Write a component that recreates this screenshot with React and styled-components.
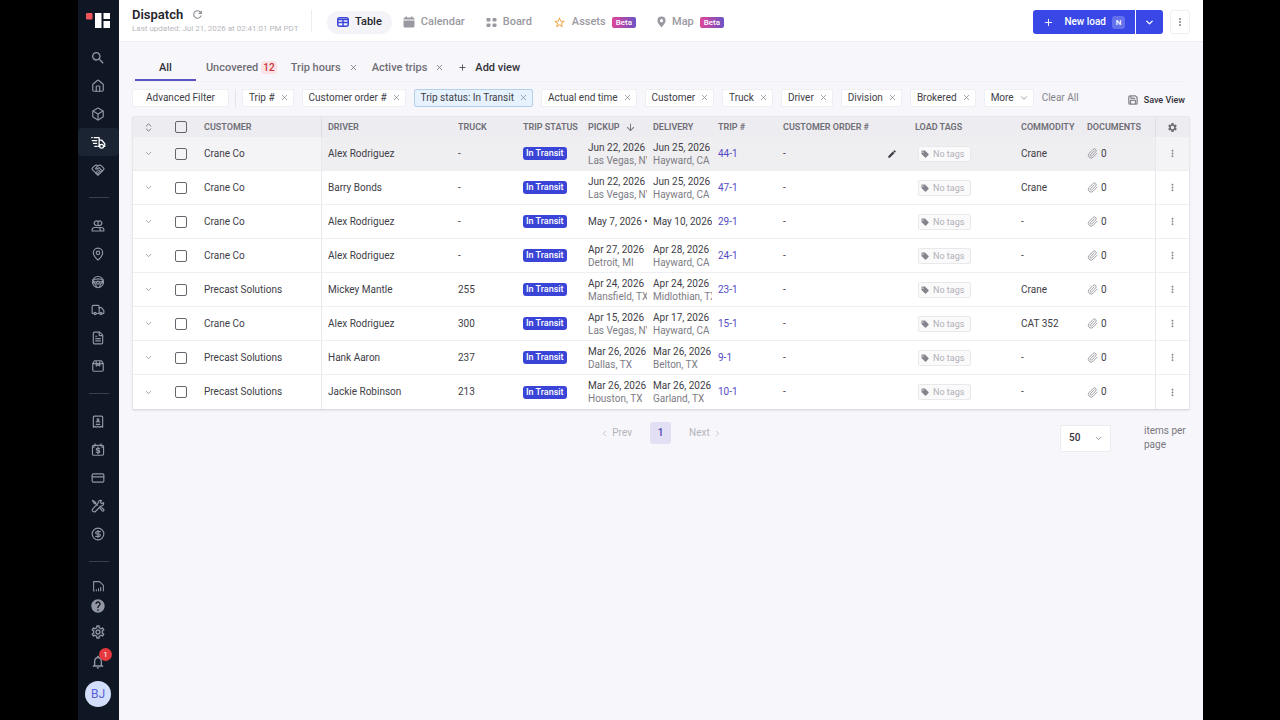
import React, { useState } from 'react';
import styled, { createGlobalStyle, css } from 'styled-components';
import {
  Box,
  ChevronDown,
  ChevronLeft,
  ChevronRight,
  ChevronsUpDown,
  CircleDollarSign,
  CreditCard,
  FileText,
  House,
  MapPin,
  Paperclip,
  Plus,
  Truck,
  X,
} from 'lucide-react';
import {
  MdArrowDownward,
  MdEdit,
  MdHelp,
  MdMoreVert,
  MdOutlineSettings,
  MdNotificationsNone,
  MdRefresh,
  MdSearch,
  MdSettings,
  MdStarBorder,
} from 'react-icons/md';

const GlobalStyle = createGlobalStyle`
  * {
    box-sizing: border-box;
  }

  body {
    margin: 0;
    background: #000;
    color: #3e3d46;
    font-family: Roboto, "Open Sans", sans-serif;
    font-size: 10px;
    line-height: 14px;
  }

  button, input, select {
    font: inherit;
    color: inherit;
  }

  button {
    border: none;
    background: none;
    padding: 0;
    cursor: pointer;
  }

  a {
    text-decoration: none;
  }

  svg {
    display: block;
    flex-shrink: 0;
  }
`;

const Shell = styled.div`
  display: flex;
  min-height: 100vh;
  padding: 0 77px 0 78px;
`;

const Sidebar = styled.nav`
  display: flex;
  flex-direction: column;
  align-items: center;
  width: 41px;
  flex-shrink: 0;
  background: #0f1724;
`;

const Logo = styled.div`
  display: flex;
  justify-content: center;
  height: 44px;
  padding: 12px 1px 0 0;
`;

const NavButton = styled.button`
  position: relative;
  display: flex;
  align-items: center;
  justify-content: center;
  width: 100%;
  height: ${(props) => props.$height || 28}px;
  padding-right: 1px;
  color: ${(props) => (props.$active ? '#ffffff' : '#9297a3')};

  ${(props) =>
    props.$active &&
    css`
      background: #1b2433;
      border-radius: 4px;
    `}
`;

const NavDivider = styled.hr`
  width: 20px;
  height: 1px;
  margin: 13px 0 14px;
  border: none;
  background: #38404e;
`;

const Count = styled.span`
  position: absolute;
  top: 0;
  right: 7px;
  width: 13px;
  height: 13px;
  border-radius: 50%;
  background: #e5383f;
  color: #fff;
  font-size: 8px;
  line-height: 13px;
  text-align: center;
`;

const Avatar = styled.button`
  width: 26px;
  height: 26px;
  margin: 5px 1px 0 0;
  border-radius: 50%;
  background: #d3defb;
  color: #5863d8;
  font-size: 12px;
`;

const Main = styled.main`
  flex: 1;
  min-width: 0;
  background: #f7f6fa;
`;

const Header = styled.header`
  display: flex;
  align-items: center;
  height: 42px;
  padding: 3px 13px 0;
  background: #fff;
  border-bottom: 1px solid #eeedf2;
`;

const TitleBlock = styled.div`
  width: 180px;
  height: 22px;
  display: flex;
  flex-direction: column;
  justify-content: center;
  margin-bottom: 3px;
  border-right: 1px solid #ececf0;
`;

const TitleRow = styled.div`
  display: flex;
  align-items: center;
  gap: 8px;
  color: #8d8d96;
`;

const Title = styled.h1`
  margin: 0;
  color: #26252d;
  font-size: 13px;
  line-height: 16px;
  font-weight: 600;
`;

const Updated = styled.span`
  color: #b9b8be;
  font-size: 8px;
  line-height: 12px;
  white-space: nowrap;
`;

const ModeTabs = styled.div`
  display: flex;
  align-items: center;
  gap: 1px;
  margin-left: 15px;
`;

const ModeTab = styled.button`
  display: flex;
  align-items: center;
  gap: 6px;
  height: 23px;
  padding: 0 10px;
  border-radius: 12px;
  background: ${(props) => (props.$active ? '#f4f4f8' : 'transparent')};
  color: ${(props) => (props.$active ? '#26252d' : '#9a99a1')};
  font-size: 11px;
  font-weight: 500;
`;

const Beta = styled.span`
  padding: 0 4px;
  border-radius: 2px;
  background: linear-gradient(90deg, #e0469a, #6b52c4);
  color: #fff;
  font-size: 8px;
  line-height: 11px;
`;

const HeaderActions = styled.div`
  display: flex;
  align-items: center;
  gap: 7px;
  margin-left: auto;
`;

const SplitButton = styled.div`
  display: flex;
  gap: 1px;
  height: 24px;
  border-radius: 3px;
  overflow: hidden;
`;

const PrimaryButton = styled.button`
  display: flex;
  align-items: center;
  justify-content: center;
  gap: ${(props) => props.$gap || 0}px;
  padding: 0 ${(props) => props.$pad}px;
  background: #3847e6;
  color: #fff;
  font-size: 10px;
  font-weight: 500;
`;

const Key = styled.kbd`
  margin-left: -4px;
  width: 13px;
  border-radius: 3px;
  background: #6470ee;
  font-family: inherit;
  font-size: 8px;
  line-height: 13px;
`;

const SquareButton = styled.button`
  display: flex;
  align-items: center;
  justify-content: center;
  width: 20px;
  height: 24px;
  border: 1px solid #f0f0f3;
  border-radius: 3px;
  color: #8d8c94;
`;

const Content = styled.div`
  padding: 10px 13px 0;
`;

const ViewTabs = styled.div`
  display: flex;
  align-items: stretch;
  height: 30px;
  margin-right: 4px;
  border-bottom: 1px solid #f0eff3;
`;

const ViewTab = styled.button`
  display: flex;
  align-items: center;
  gap: ${(props) => props.$gap || 8}px;
  margin: ${(props) => (props.$active ? '0 3px' : 0)};
  padding: 4px ${(props) => (props.$active ? 24 : 7)}px 0;
  border-bottom: 2px solid ${(props) => (props.$active ? '#5a55c6' : 'transparent')};
  color: ${(props) => (props.$dark ? '#34333b' : '#6f6e76')};
  font-size: 11px;
  font-weight: 500;
`;

const RedCount = styled.span`
  padding: 0 2px;
  border-radius: 4px;
  background: #fbe3e5;
  color: #c8323c;
  font-size: 10px;
  line-height: 13px;
`;

const Filters = styled.div`
  display: flex;
  align-items: center;
  gap: 8px;
  height: 34px;
  padding-bottom: 3px;
`;

const Chip = styled.button`
  display: flex;
  align-items: center;
  justify-content: center;
  gap: 5px;
  height: 18px;
  padding: ${(props) => (props.$wide ? '0 13px' : '0 4px 0 6px')};
  border: 1px solid ${(props) => (props.$active ? '#b3d0e8' : '#efeef2')};
  border-radius: 2px;
  background: ${(props) => (props.$active ? '#e6f2fd' : '#fff')};
  white-space: nowrap;

  svg {
    color: #8b8a92;
  }
`;

const Separator = styled.span`
  width: 1px;
  height: 18px;
  margin: 0 -2px;
  background: #e5e4e9;
`;

const TextButton = styled.button`
  color: #85848c;
  white-space: nowrap;
`;

const SaveButton = styled.button`
  display: flex;
  align-items: center;
  gap: 6px;
  margin: 4px 5px 0 auto;
  color: #34333b;
  font-size: 9px;
  font-weight: 500;
  white-space: nowrap;

  svg {
    color: #85848c;
  }
`;

const TableCard = styled.div`
  border: 1px solid #e7e6eb;
  border-bottom-color: #dcdbe0;
  border-radius: 2px;
  background: #fff;
  box-shadow: 0 1px 2px rgba(30, 25, 50, 0.08);
`;

const Table = styled.table`
  width: 100%;
  table-layout: fixed;
  border-collapse: separate;
  border-spacing: 0;
`;

const Th = styled.th`
  height: 20px;
  padding: 0 6px;
  background: #edecf0;
  border-right: ${(props) => (props.$line ? '1px solid #dedde3' : 'none')};
  color: #6f6e77;
  font-size: 9px;
  font-weight: 600;
  text-align: left;
  text-transform: uppercase;
  white-space: nowrap;

  svg {
    margin: 0 auto;
  }
`;

const SortLabel = styled.span`
  display: flex;
  align-items: center;
  justify-content: space-between;
  padding-right: 5px;

  svg {
    margin: 0;
  }
`;

const Td = styled.td`
  height: 34px;
  padding: 0 6px;
  border-bottom: 1px solid #efeef3;
  border-right: ${(props) => (props.$line ? '1px solid #e9e8ed' : 'none')};
  white-space: nowrap;
  overflow: hidden;
`;

const Row = styled.tr`
  &:last-child td {
    border-bottom: none;
  }

  ${(props) =>
    props.$hovered &&
    css`
      td {
        background: #efeef1;
      }

      td:nth-child(-n + 3),
      td:last-child {
        background: #f4f3f6;
      }
    `}
`;

const IconButton = styled.button`
  display: block;
  margin: 0 auto;
  color: #85848c;
`;

const Checkbox = styled.input`
  display: block;
  appearance: none;
  width: 12px;
  height: 12px;
  margin: 0 auto;
  border: 1px solid #66656d;
  border-radius: 2px;

  &:checked {
    background: #3847e6;
  }
`;

const Status = styled.span`
  display: inline-block;
  padding: 0 3px;
  border-radius: 3px;
  background: #3a45d8;
  color: #fff;
  font-size: 9px;
  line-height: 13px;
  font-weight: 500;
  vertical-align: middle;
`;

const Stop = styled.div`
  overflow: hidden;
  line-height: 13px;
  margin-right: -6px;
`;

const Place = styled.div`
  color: #7d7c84;
`;

const TripLink = styled.a`
  color: #544bc4;
`;

const OrderCell = styled.div`
  display: flex;
  align-items: center;
  justify-content: space-between;
  padding-right: 6px;
`;

const Tags = styled.button`
  display: flex;
  align-items: center;
  gap: 4px;
  height: 16px;
  margin-left: 3px;
  padding: 0 6px 0 2px;
  border: 1px solid #e9e9ed;
  border-radius: 2px;
  background: #fafafb;
  color: #b0afb6;
  font-size: 9px;
`;

const Docs = styled.div`
  display: flex;
  align-items: center;
  gap: 3px;

  svg {
    color: #98979f;
  }
`;

const Footer = styled.footer`
  display: grid;
  grid-template-columns: 1fr auto 1fr;
  align-items: start;
  padding-top: 12px;
`;

const Pager = styled.div`
  grid-column: 2;
  display: flex;
  align-items: center;
  gap: 18px;
`;

const PageStep = styled.button`
  display: flex;
  align-items: center;
  gap: 3px;
  color: #b5b4bb;
`;

const CurrentPage = styled.button`
  width: 21px;
  height: 22px;
  border-radius: 3px;
  background: #e3e0f6;
  color: #4a44b0;
  font-weight: 500;
`;

const PageSize = styled.label`
  display: flex;
  align-items: center;
  justify-content: flex-end;
  gap: 33px;
  padding-top: 2px;
  color: #77767e;
`;

const SelectBox = styled.span`
  display: grid;
  align-items: center;
  width: 51px;

  select,
  svg {
    grid-row: 1;
    grid-column: 1;
  }

  select {
    appearance: none;
    width: 100%;
    height: 27px;
    padding: 0 8px;
    border: 1px solid #ecebf0;
    border-radius: 2px;
    background: #fff;
    color: #34333b;
    font-weight: 500;
  }

  svg {
    justify-self: end;
    margin-right: 8px;
    pointer-events: none;
  }
`;

const PageSizeText = styled.span`
  width: 46px;
`;

const Glyph = ({ size = 14, width = 2, children }) => (
  <svg
    width={size}
    height={size}
    viewBox="0 0 24 24"
    fill="none"
    stroke="currentColor"
    strokeWidth={width}
    strokeLinecap="round"
    strokeLinejoin="round"
    aria-hidden="true"
  >
    {children}
  </svg>
);

const LogoMark = () => (
  <svg width="24" height="17" viewBox="0 0 24 17" aria-label="Home">
    <rect x="0" y="1" width="6.5" height="6.5" rx="1" fill="#f0555c" />
    <path fill="#fff" d="M9 1h6.5v15H9zM17.5 1H24v6h-6.5zM17.5 9H24v7h-6.5z" />
  </svg>
);

const DispatchIcon = () => (
  <Glyph size={15}>
    <path d="M5 4h8v14h-2M13 8h4l5 6v4h-2M1 4h1M2 9h7M4 13.500h5M6 18h3M14 18a3 3 0 0 0 6 0M14 18a3 3 0 0 1 6 0" />
  </Glyph>
);

const HandshakeIcon = () => (
  <Glyph>
    <path d="M12 21 2.5 11.500a2 2 0 0 1 0-3L6.500 4.500Q9 2.500 12 4.500 15 2.500 17.500 4.500l4 4a2 2 0 0 1 0 3z" />
    <path d="M12 4.500 7.500 9.500q1.500 2.500 4.500-.5l2-1 5.500 6M8 17l3-3M10.500 19l3-3M13 12l4 4" />
  </Glyph>
);

const UsersIcon = () => (
  <Glyph>
    <path d="M12 4.500a3.800 3.800 0 1 0 0 5.500M12 4.500a3.800 3.800 0 1 1 0 5.500M12 4.500v5.500" />
    <path d="M2 20.500v-2q0-4 4-4h6q4 0 4 4v2zM15 14.500h3q4 0 4 4v2h-6" />
  </Glyph>
);

const WheelIcon = () => (
  <Glyph>
    <circle cx="12" cy="12" r="9.500" />
    <circle cx="12" cy="13" r="2.500" />
    <path d="M3 9q9-5 18 0M3 13q5 0 6 6v2M21 13q-5 0-6 6v2M4 11l6 1M20 11l-6 1" />
  </Glyph>
);

const ParcelIcon = () => (
  <Glyph>
    <path d="M3 8v11q0 2 2 2h14q2 0 2-2V8l-3-5H6zM3 8h18M9 3v9l3-2 3 2V3" />
  </Glyph>
);

const ReceiptIcon = () => (
  <Glyph>
    <path d="M4 21V4q0-2 2-2h12q2 0 2 2v17l-2.500-1.500L15 21l-3-1.500L9 21l-2.500-1.500zM9 16h6" />
    <circle cx="12" cy="8" r="1.500" />
    <path d="M9 12q3-2 6 0" />
  </Glyph>
);

const CalendarDollarIcon = () => (
  <Glyph>
    <rect x="2.500" y="4" width="19" height="17" rx="2" />
    <path d="M7 1.500V5M17 1.500V5M2.500 7h3M18.500 7h3M15 10q-1-1.500-3-1.500c-4 0-4 4 0 4s4 4.500 0 4.500q-2 0-3-1.500M12 7v11.500" />
  </Glyph>
);

const ToolsIcon = () => (
  <Glyph>
    <path d="M3 2.500 8 6v2l3 3M8 8H6L2.500 3M14 14l5 6q2 1.500 3-.5.500-1-.5-2L16 13M21.500 6l-3 2-2.500-2 2-3.500q-6-1-6 5L3 17q-2 3 .5 4.500T8 21l9-9q5.500 0 4.500-6z" />
  </Glyph>
);

const ReportIcon = () => (
  <Glyph size={13}>
    <path d="M3 20V3h11l7 7v10M8 20v-2M12 20v-4M16 20v-6M3 20h1" />
  </Glyph>
);

const TableIcon = () => (
  <svg width="12" height="10" viewBox="0 0 24 20" aria-hidden="true">
    <rect x="1.500" y="1.500" width="21" height="17" rx="4" fill="none" stroke="#3b47d8" strokeWidth="3" />
    <path d="M2 5h20M2 11h20M12 5v13" fill="none" stroke="#3b47d8" strokeWidth="3" />
  </svg>
);

const CalendarIcon = () => (
  <svg width="12" height="12" viewBox="0 0 24 24" fill="currentColor" aria-hidden="true">
    <path d="M5 1h3v2h8V1h3v2h1q3 0 3 3v1H1V6q0-3 3-3h1zM1 9h22v11q0 3-3 3H4q-3 0-3-3z" />
  </svg>
);

const BoardIcon = () => (
  <svg width="11" height="11" viewBox="0 0 22 22" fill="currentColor" aria-hidden="true">
    <rect x="1" y="2" width="8" height="7" rx="2" />
    <rect x="13" y="2" width="8" height="7" rx="2" />
    <rect x="1" y="13" width="8" height="7" rx="2" />
    <rect x="13" y="13" width="8" height="7" rx="2" />
  </svg>
);

const PinIcon = () => (
  <svg width="9" height="12" viewBox="0 0 20 26" fill="currentColor" aria-hidden="true">
    <path fillRule="evenodd" d="M10 1a9 9 0 0 1 9 9c0 6-6 10-9 15C7 20 1 16 1 10a9 9 0 0 1 9-9zm0 5.500a3.500 3.500 0 1 0 0 7 3.500 3.500 0 0 0 0-7z" />
  </svg>
);

const TagIcon = () => (
  <svg width="8" height="8" viewBox="0 0 16 16" aria-hidden="true">
    <path fill="#85848c" fillRule="evenodd" d="M1 2q0-1 1-1h6l7 7q1 1 0 2l-5 5q-1 1-2 0L1 8zm3 1a1.200 1.200 0 1 0 .1 0z" />
  </svg>
);

const SaveIcon = () => (
  <Glyph size={10} width={3}>
    <path d="M2 5q0-3 3-3h13l4 4v13q0 3-3 3H5q-3 0-3-3zM6 21v-8h12v8M7 3v5h9" />
  </Glyph>
);

const navGroups = [
  [
    { name: 'Search', icon: <MdSearch size={16} /> },
    { name: 'Home', icon: <House size={14} /> },
    { name: 'Loads', icon: <Box size={14} /> },
    { name: 'Dispatch', icon: <DispatchIcon />, active: true },
    { name: 'Brokerage', icon: <HandshakeIcon /> },
  ],
  [
    { name: 'Customers', icon: <UsersIcon /> },
    { name: 'Locations', icon: <MapPin size={14} /> },
    { name: 'Drivers', icon: <WheelIcon /> },
    { name: 'Trucks', icon: <Truck size={14} /> },
    { name: 'Files', icon: <FileText size={14} /> },
    { name: 'Inventory', icon: <ParcelIcon /> },
  ],
  [
    { name: 'Invoices', icon: <ReceiptIcon /> },
    { name: 'Payroll', icon: <CalendarDollarIcon /> },
    { name: 'Cards', icon: <CreditCard size={14} /> },
    { name: 'Maintenance', icon: <ToolsIcon /> },
    { name: 'Accounting', icon: <CircleDollarSign size={14} /> },
  ],
];

const filters = [
  { label: 'Trip #' },
  { label: 'Customer order #' },
  { label: 'Trip status: In Transit', active: true },
  { label: 'Actual end time' },
  { label: 'Customer' },
  { label: 'Truck' },
  { label: 'Driver' },
  { label: 'Division' },
  { label: 'Brokered' },
];

// the customer order column has no width and takes what is left
const columnWidths = [31, 34, 124, 130, 65, 65, 65, 65, 65, null, 106, 66, 75, 33];

const trips = [
  { id: '44-1', customer: 'Crane Co', driver: 'Alex Rodriguez', truck: '-', pickup: ['Jun 22, 2026', 'Las Vegas, NV'], delivery: ['Jun 25, 2026', 'Hayward, CA'], commodity: 'Crane' },
  { id: '47-1', customer: 'Crane Co', driver: 'Barry Bonds', truck: '-', pickup: ['Jun 22, 2026', 'Las Vegas, NV'], delivery: ['Jun 25, 2026', 'Hayward, CA'], commodity: 'Crane' },
  { id: '29-1', customer: 'Crane Co', driver: 'Alex Rodriguez', truck: '-', pickup: ['May 7, 2026 •'], delivery: ['May 10, 2026'], commodity: '-' },
  { id: '24-1', customer: 'Crane Co', driver: 'Alex Rodriguez', truck: '-', pickup: ['Apr 27, 2026 •', 'Detroit, MI'], delivery: ['Apr 28, 2026', 'Hayward, CA'], commodity: '-' },
  { id: '23-1', customer: 'Precast Solutions', driver: 'Mickey Mantle', truck: '255', pickup: ['Apr 24, 2026', 'Mansfield, TX'], delivery: ['Apr 24, 2026', 'Midlothian, TX'], commodity: 'Crane' },
  { id: '15-1', customer: 'Crane Co', driver: 'Alex Rodriguez', truck: '300', pickup: ['Apr 15, 2026 •', 'Las Vegas, NV'], delivery: ['Apr 17, 2026 •', 'Hayward, CA'], commodity: 'CAT 352' },
  { id: '9-1', customer: 'Precast Solutions', driver: 'Hank Aaron', truck: '237', pickup: ['Mar 26, 2026', 'Dallas, TX'], delivery: ['Mar 26, 2026', 'Belton, TX'], commodity: '-' },
  { id: '10-1', customer: 'Precast Solutions', driver: 'Jackie Robinson', truck: '213', pickup: ['Mar 26, 2026', 'Houston, TX'], delivery: ['Mar 26, 2026', 'Garland, TX'], commodity: '-' },
];

const StopCell = ({ stop }) => (
  <Td>
    <Stop>
      <div>{stop[0]}</div>
      {stop[1] && <Place>{stop[1]}</Place>}
    </Stop>
  </Td>
);

const SideNav = () => (
  <Sidebar>
    <Logo>
      <LogoMark />
    </Logo>
    {navGroups.map((group, index) => (
      <React.Fragment key={index}>
        {group.map((item) => (
          <NavButton key={item.name} aria-label={item.name} $active={item.active}>
            {item.icon}
          </NavButton>
        ))}
        <NavDivider />
      </React.Fragment>
    ))}
    <NavButton aria-label="Reports" $height={20}>
      <ReportIcon />
    </NavButton>
    <NavButton aria-label="Help" $height={20}>
      <MdHelp size={16} />
    </NavButton>
    <NavButton aria-label="Settings" $height={32}>
      <MdOutlineSettings size={16} />
    </NavButton>
    <NavButton aria-label="Notifications">
      <MdNotificationsNone size={16} />
      <Count>1</Count>
    </NavButton>
    <Avatar>BJ</Avatar>
  </Sidebar>
);

const App = () => {
  const [selected, setSelected] = useState([]);
  const [pageSize, setPageSize] = useState('50');

  const toggle = (id) => {
    setSelected(selected.includes(id) ? selected.filter((s) => s !== id) : [...selected, id]);
  };

  const toggleAll = () => {
    setSelected(selected.length === trips.length ? [] : trips.map((trip) => trip.id));
  };

  return (
    <Shell>
      <GlobalStyle />
      <SideNav />
      <Main>
        <Header>
          <TitleBlock>
            <TitleRow>
              <Title>Dispatch</Title>
              <MdRefresh size={13} />
            </TitleRow>
            <Updated>Last updated: Jul 21, 2026 at 02:41:01 PM PDT</Updated>
          </TitleBlock>
          <ModeTabs>
            <ModeTab $active><TableIcon />Table</ModeTab>
            <ModeTab><CalendarIcon />Calendar</ModeTab>
            <ModeTab><BoardIcon />Board</ModeTab>
            <ModeTab><MdStarBorder size={13} color="#eda33c" />Assets<Beta>Beta</Beta></ModeTab>
            <ModeTab><PinIcon />Map<Beta>Beta</Beta></ModeTab>
          </ModeTabs>
          <HeaderActions>
            <SplitButton>
              <PrimaryButton $pad={10} $gap={10}>
                <Plus size={11} />
                New load
                <Key>N</Key>
              </PrimaryButton>
              <PrimaryButton $pad={8} aria-label="More load options">
                <ChevronDown size={11} strokeWidth={3} />
              </PrimaryButton>
            </SplitButton>
            <SquareButton aria-label="More actions">
              <MdMoreVert size={12} />
            </SquareButton>
          </HeaderActions>
        </Header>

        <Content>
          <ViewTabs>
            <ViewTab $active $dark>All</ViewTab>
            <ViewTab $gap={3}>Uncovered<RedCount>12</RedCount></ViewTab>
            <ViewTab>Trip hours<X size={9} /></ViewTab>
            <ViewTab>Active trips<X size={9} /></ViewTab>
            <ViewTab $dark><Plus size={9} />Add view</ViewTab>
          </ViewTabs>

          <Filters>
            <Chip $wide>Advanced Filter</Chip>
            <Separator />
            {filters.map((filter) => (
              <Chip key={filter.label} $active={filter.active}>
                {filter.label}
                <X size={9} />
              </Chip>
            ))}
            <Chip>More<ChevronDown size={10} /></Chip>
            <TextButton>Clear All</TextButton>
            <SaveButton><SaveIcon />Save View</SaveButton>
          </Filters>

          <TableCard>
            <Table>
              <colgroup>
                {columnWidths.map((width, index) => (
                  <col key={index} width={width || undefined} />
                ))}
              </colgroup>
              <thead>
                <tr>
                  <Th><ChevronsUpDown size={11} /></Th>
                  <Th>
                    <Checkbox
                      type="checkbox"
                      aria-label="Select all trips"
                      checked={selected.length === trips.length}
                      onChange={toggleAll}
                    />
                  </Th>
                  <Th $line>Customer</Th>
                  <Th>Driver</Th>
                  <Th>Truck</Th>
                  <Th>Trip status</Th>
                  <Th><SortLabel>Pickup<MdArrowDownward size={11} /></SortLabel></Th>
                  <Th>Delivery</Th>
                  <Th>Trip #</Th>
                  <Th>Customer order #</Th>
                  <Th>Load tags</Th>
                  <Th>Commodity</Th>
                  <Th $line>Documents</Th>
                  <Th><MdSettings size={11} /></Th>
                </tr>
              </thead>
              <tbody>
                {trips.map((trip, index) => (
                  <Row key={trip.id} $hovered={index === 0}>
                    <Td>
                      <IconButton aria-label="Expand trip"><ChevronDown size={9} /></IconButton>
                    </Td>
                    <Td>
                      <Checkbox
                        type="checkbox"
                        aria-label={`Select trip ${trip.id}`}
                        checked={selected.includes(trip.id)}
                        onChange={() => toggle(trip.id)}
                      />
                    </Td>
                    <Td $line>{trip.customer}</Td>
                    <Td>{trip.driver}</Td>
                    <Td>{trip.truck}</Td>
                    <Td><Status>In Transit</Status></Td>
                    <StopCell stop={trip.pickup} />
                    <StopCell stop={trip.delivery} />
                    <Td><TripLink href={`#${trip.id}`}>{trip.id}</TripLink></Td>
                    <Td>
                      <OrderCell>
                        -
                        {index === 0 && <MdEdit size={10} />}
                      </OrderCell>
                    </Td>
                    <Td><Tags><TagIcon />No tags</Tags></Td>
                    <Td>{trip.commodity}</Td>
                    <Td $line><Docs><Paperclip size={11} />0</Docs></Td>
                    <Td>
                      <IconButton aria-label="Trip actions"><MdMoreVert size={11} /></IconButton>
                    </Td>
                  </Row>
                ))}
              </tbody>
            </Table>
          </TableCard>

          <Footer>
            <Pager>
              <PageStep><ChevronLeft size={9} />Prev</PageStep>
              <CurrentPage>1</CurrentPage>
              <PageStep>Next<ChevronRight size={9} /></PageStep>
            </Pager>
            <PageSize>
              <SelectBox>
                <select value={pageSize} onChange={(e) => setPageSize(e.target.value)}>
                  <option value="25">25</option>
                  <option value="50">50</option>
                  <option value="100">100</option>
                </select>
                <ChevronDown size={9} />
              </SelectBox>
              <PageSizeText>items per page</PageSizeText>
            </PageSize>
          </Footer>
        </Content>
      </Main>
    </Shell>
  );
};

export default App;
